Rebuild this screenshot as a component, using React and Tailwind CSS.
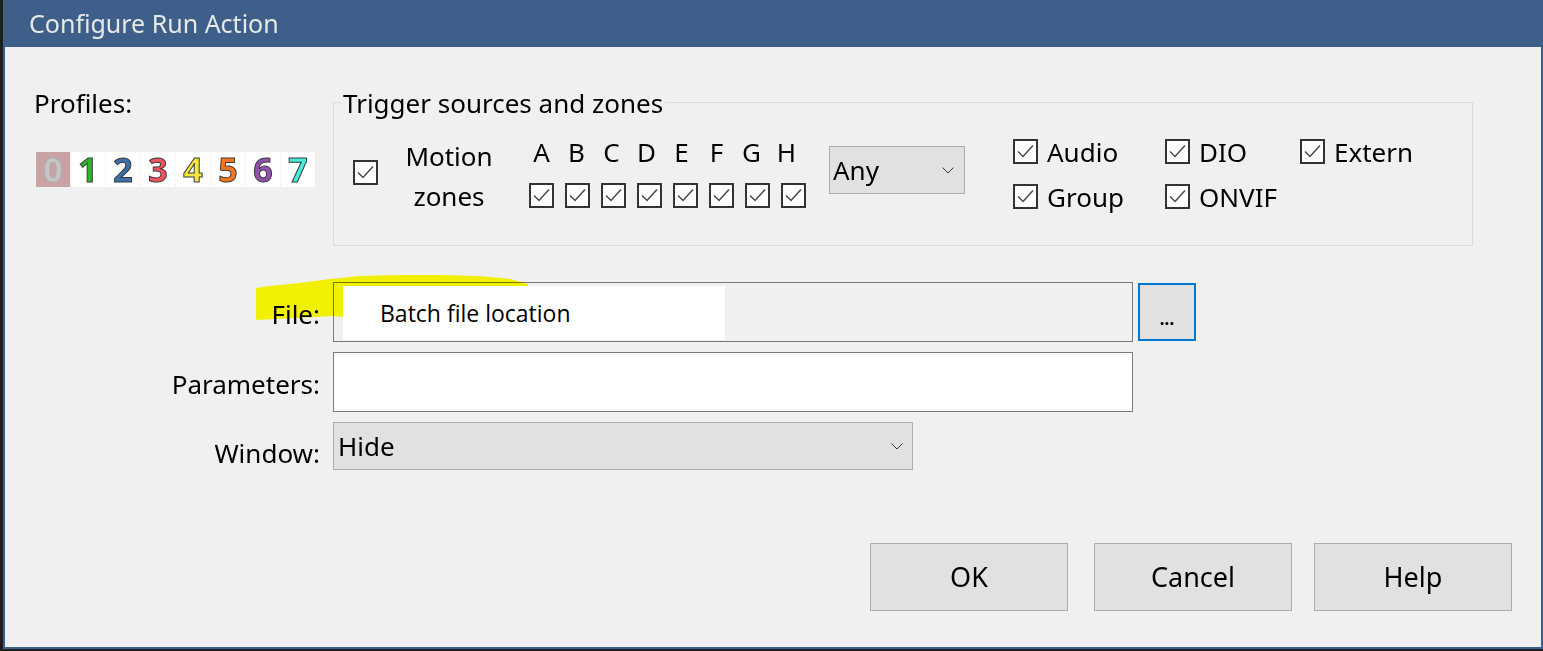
const profiles = [
  { n: '0', cell: 'bg-[#c9a3a3]', text: 'text-[#c6c6c6] [-webkit-text-stroke:1px_#b0b0b0]' },
  { n: '1', cell: 'bg-white', text: 'text-[#2fb52b] [-webkit-text-stroke:1px_#3a3a3a]' },
  { n: '2', cell: 'bg-white', text: 'text-[#3d6fa8] [-webkit-text-stroke:1px_#3a3a3a]' },
  { n: '3', cell: 'bg-white', text: 'text-[#f2525e] [-webkit-text-stroke:1px_#3a3a3a]' },
  { n: '4', cell: 'bg-white', text: 'text-[#f5e83c] [-webkit-text-stroke:1px_#3a3a3a]' },
  { n: '5', cell: 'bg-white', text: 'text-[#f57620] [-webkit-text-stroke:1px_#3a3a3a]' },
  { n: '6', cell: 'bg-white', text: 'text-[#9152ad] [-webkit-text-stroke:1px_#3a3a3a]' },
  { n: '7', cell: 'bg-white', text: 'text-[#45ecdc] [-webkit-text-stroke:1px_#3a3a3a]' },
];

const zones = ['A', 'B', 'C', 'D', 'E', 'F', 'G', 'H'];

const Check = () => (
  <div className="w-[25px] h-[25px] shrink-0 border-2 border-[#333] bg-white flex items-center justify-center">
    <svg width="21" height="21" viewBox="0 0 21 21" fill="none">
      <polyline points="3,10.5 8,15.5 18,4.5" stroke="#4a4a4a" strokeWidth="1.5" />
    </svg>
  </div>
);

const Chevron = () => (
  <svg width="12" height="7" viewBox="0 0 12 7" fill="none">
    <polyline points="0.5,0.5 6,6 11.5,0.5" stroke="#333" strokeWidth="1" />
  </svg>
);

const CheckItem = ({ label }) => (
  <div className="flex items-center gap-[9px] h-[45px]">
    <Check />
    <span>{label}</span>
  </div>
);

const Button = ({ children }) => (
  <button className="w-[198px] h-[68px] bg-[#e1e1e1] border border-[#adadad] text-[27px] leading-[32px]">
    {children}
  </button>
);

export default function App() {
  return (
    <div className="w-[1543px] h-[651px] bg-[#1e1e1e] pl-[3px] pb-[2px] font-['Noto_Sans',sans-serif] text-black">
      <div className="h-full flex flex-col border-x-2 border-b-2 border-[#3e5f89] bg-[#f0f0f0]">
        <div className="h-[47px] shrink-0 bg-[#3e5f89] -mx-[2px] pl-[26px] flex items-center">
          <span className="text-[25px] text-[#e8e8e8]">Configure Run Action</span>
        </div>

        <div className="flex-1 pl-[29px] pr-[29px] pt-[40px] text-[26px] leading-[32px]">
          <div className="flex">
            <div className="w-[299px] shrink-0">
              <div>Profiles:</div>
              <div className="mt-[33px] ml-[1px] flex w-[281px]">
                {profiles.map((p) => (
                  <div
                    key={p.n}
                    className={`w-[35px] h-[35px] flex items-center justify-center border-l border-[#f4f4f4] ${p.cell}`}
                  >
                    <span className={`text-[34px] leading-[35px] font-bold ${p.text}`}>{p.n}</span>
                  </div>
                ))}
              </div>
            </div>

            <div className="relative mt-[15px] w-[1140px] h-[144px] border border-[#dcdcdc] flex items-start">
              <span className="absolute -top-[16px] left-[7px] px-[2px] bg-[#f0f0f0]">Trigger sources and zones</span>

              <div className="ml-[19px] mt-[57px]">
                <Check />
              </div>

              <div className="ml-[23px] mt-[33px] w-[96px] text-center leading-[40px]">
                Motion
                <br />
                zones
              </div>

              <div className="ml-[27px] mt-[33px]">
                <div className="flex">
                  {zones.map((z) => (
                    <span key={z} className="w-[35px] text-center">{z}</span>
                  ))}
                </div>
                <div className="mt-[15px] pl-[5px] flex gap-[11px]">
                  {zones.map((z) => (
                    <Check key={z} />
                  ))}
                </div>
              </div>

              <div className="ml-[23px] mt-[43px] w-[136px] h-[48px] bg-[#e1e1e1] border border-[#adadad] flex items-center justify-between pl-[3px] pr-[10px]">
                <span>Any</span>
                <Chevron />
              </div>

              <div className="ml-[48px] mt-[26px] grid grid-cols-[152px_135px_auto]">
                <CheckItem label="Audio" />
                <CheckItem label="DIO" />
                <CheckItem label="Extern" />
                <CheckItem label="Group" />
                <CheckItem label="ONVIF" />
              </div>
            </div>
          </div>

          <div className="relative mt-[36px] flex items-start">
            <svg
              className="absolute left-[222px] -top-[8px] mix-blend-multiply pointer-events-none z-10"
              width="280"
              height="50"
              viewBox="0 0 280 50"
            >
              <path
                d="M0 14 L14 12 L44 9 L74 5 L104 2 L144 1 L184 1 L224 2 L254 5 L272 10 L272 44 L100 44 L77 42 L40 44 L0 46 Z"
                fill="#ffff00"
              />
            </svg>
            <div className="w-[286px] shrink-0 text-right pt-[16px]">File:</div>
            <div className="ml-[13px] w-[800px] h-[60px] border border-[#7a7a7a] bg-[#f0f0f0] pl-[9px] pt-[3px] pb-[1px]">
              <div className="relative z-20 w-[382px] h-full bg-white pl-[37px] flex items-center font-['Open_Sans',sans-serif] text-[23px]">
                Batch file location
              </div>
            </div>
            <button className="ml-[5px] mt-[1px] w-[58px] h-[58px] border-2 border-[#0078d7] bg-[#e1e1e1] flex items-end justify-center pb-[10px] text-[17px] leading-[20px] font-bold">
              ...
            </button>
          </div>

          <div className="mt-[10px] flex items-start">
            <div className="w-[286px] shrink-0 text-right pt-[16px]">Parameters:</div>
            <div className="ml-[13px] w-[800px] h-[60px] border border-[#7a7a7a] bg-white" />
          </div>

          <div className="mt-[10px] flex items-start">
            <div className="w-[286px] shrink-0 text-right pt-[15px]">Window:</div>
            <div className="ml-[13px] w-[580px] h-[48px] bg-[#e1e1e1] border border-[#adadad] flex items-center justify-between pl-[4px] pr-[9px]">
              <span>Hide</span>
              <Chevron />
            </div>
          </div>

          <div className="mt-[73px] flex justify-end">
            <Button>OK</Button>
            <div className="ml-[26px]">
              <Button>Cancel</Button>
            </div>
            <div className="ml-[22px]">
              <Button>Help</Button>
            </div>
          </div>
        </div>
      </div>
    </div>
  );
}
